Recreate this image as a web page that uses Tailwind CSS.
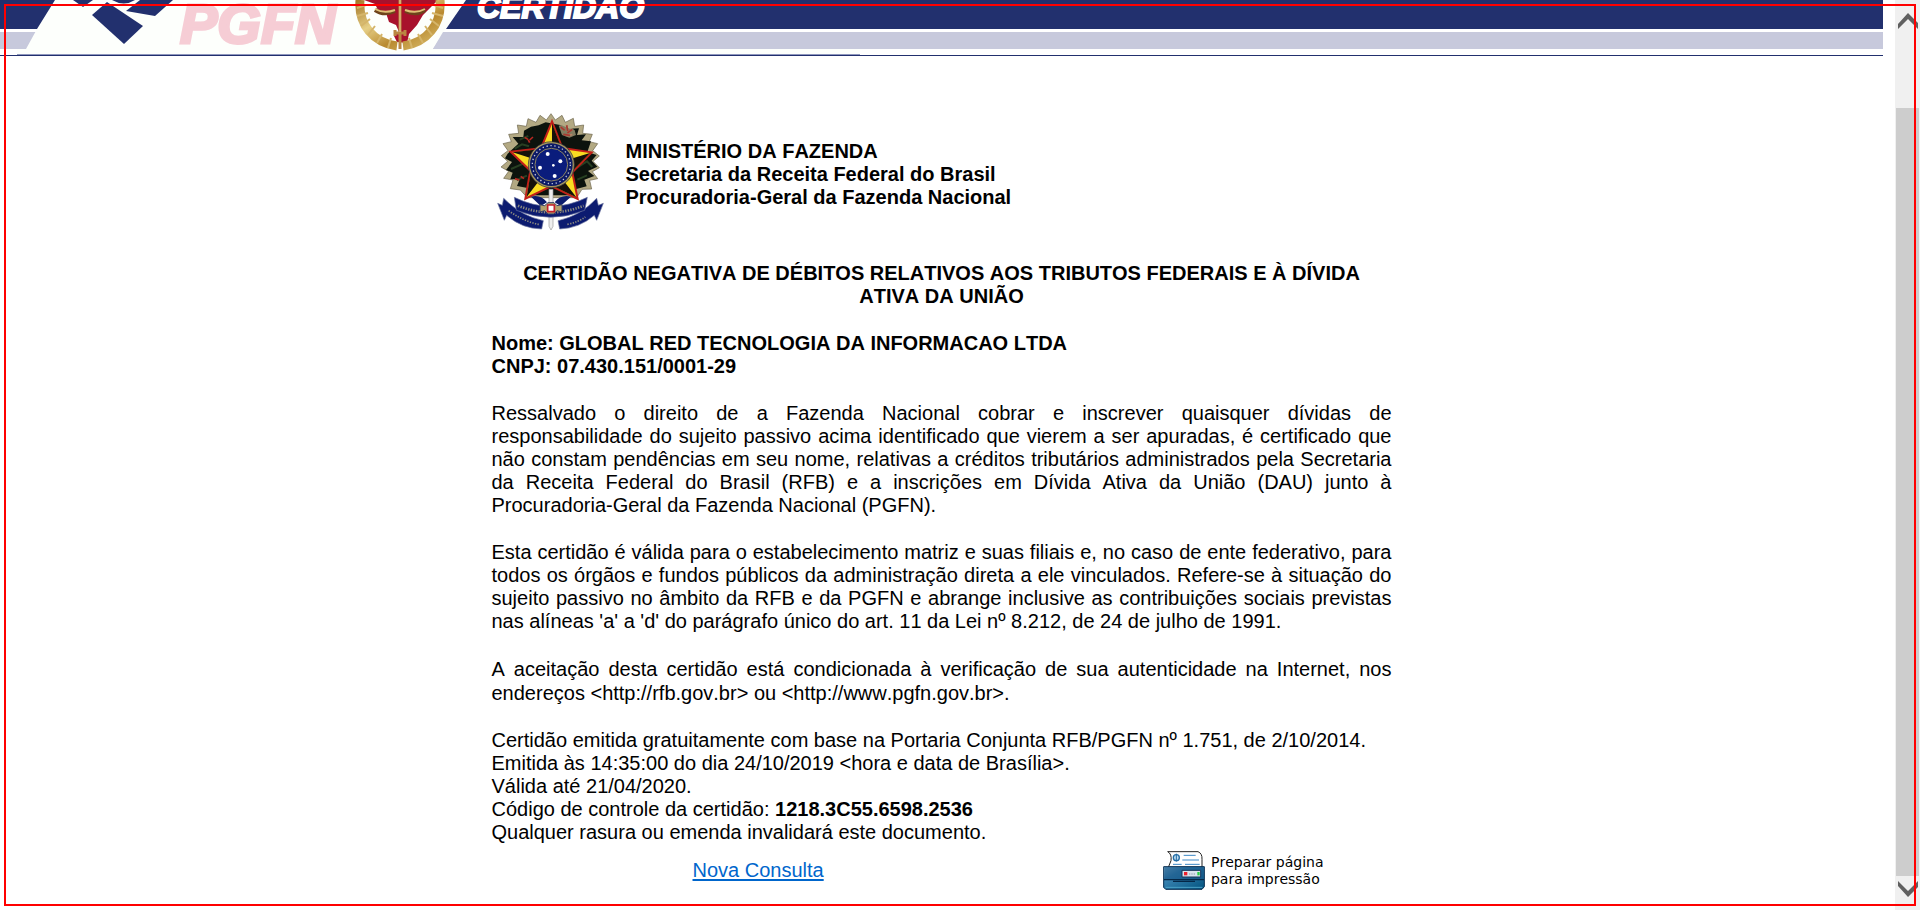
<!DOCTYPE html>
<html lang="pt-BR">
<head>
<meta charset="utf-8">
<title>Certidão Negativa de Débitos</title>
<script src="https://cdn.jsdelivr.net/npm/@tailwindcss/browser@4"></script>
</head>
<body class="relative flex h-screen overflow-hidden bg-white font-['Liberation_Sans',Arial,sans-serif] text-[20px] leading-[23px] text-black [font-kerning:none]">

<div class="mr-3 min-w-0 flex-1">
  <header class="relative overflow-hidden">
    <div class="h-[29px] bg-[#22306e]"></div>
    <div class="mt-[3px] h-[17px] bg-[#c7c9dc]"></div>
    <div class="mt-[6px] h-px bg-[#22306e]"></div>
    <svg class="absolute top-0 left-0" width="860" height="56" viewBox="0 0 860 56" role="img" aria-label="Receita Federal e PGFN, Certidão">
      <defs>
        <linearGradient id="gold" x1="0" x2="1" y1="0" y2="1"><stop offset="0" stop-color="#a77b2c"/><stop offset=".35" stop-color="#e6cf86"/><stop offset=".65" stop-color="#b98a30"/><stop offset="1" stop-color="#d9bd6c"/></linearGradient>
      </defs>
      <path d="M55 0H466L446 29 433 49H860V54H17V49H26L37 29Z" fill="#fdfffc"/>
      <path d="M443 32H860V49H433Z" fill="#c7c9dc"/>
      <path d="M446 29H860V32H443Z" fill="#fff"/>
      <path d="M17 54.500H860" stroke="#8f97bd"/>
      <g fill="#22306e">
        <path d="M107 2 143 26 124 44 92 15Z"/>
        <path d="M140 0H173L155 16 126 11Z"/>
        <path d="M73 0H93L83 7Z"/>
        <path d="M112 0H135Q124 7 112 0Z"/>
      </g>
      <text x="180" y="43" font-size="56" font-weight="700" font-style="italic" fill="#f6cdd5" stroke="#f6cdd5" stroke-width="3">PGFN</text>
      <path d="M364 0H438L432 6 423 15 417 25 409 34 407 43 397 42 394 36 399 32 396 25 389 22 386 13 378 10 375 4Z" fill="#a8112c"/>
      <path d="M360 0C358 25 374 43 397 46M440 0C442 25 426 43 403 46" fill="none" stroke="url(#gold)" stroke-width="9"/>
      <path d="M357 8 366 5M357 16 368 13M361 26 370 19M368 35 375 26M377 43 382 34M388 48 391 38M443 8 434 5M443 16 432 13M439 26 430 19M432 35 425 26M423 43 418 34M412 48 409 38" stroke="#d5b56a" stroke-width="2"/>
      <path d="M375 10Q384 16 395 11M405 11Q416 16 425 10" fill="none" stroke="#6e431b" stroke-width="4"/>
      <path d="M375 9Q384 14 395 10M405 10Q416 14 425 9" fill="none" stroke="#e1c077" stroke-width="2"/>
      <path d="M400 0V49M394 33H406M395 30V36M405 30V36" fill="none" stroke="#ba8641" stroke-width="3"/>
      <path d="M400 0V32" stroke="#efd09a"/>
      <text x="477" y="18" font-size="32" font-weight="700" font-style="italic" fill="#fff" stroke="#fff" stroke-width="2">CERTIDÃO</text>
    </svg>
  </header>

  <main class="mx-auto max-w-[900px] pt-[57px]">
    <div class="mb-[31px] flex items-center gap-[22px] pl-1">
      <svg class="shrink-0" width="108" height="118" viewBox="48 38 324 354" role="img" aria-label="Brasão da República">
        <path d="M213 40 226 59 246 45 256 66 280 54 284 78 311 74 308 99 337 102 328 124 353 130 338 151 358 167 339 183 358 202 337 214 353 235 329 240 335 266 306 267 290 292H142L121 269 91 265 99 239 71 234 86 213 63 200 83 183 64 166 84 151 69 130 94 124 86 102 116 99 112 74 139 78 144 55 168 66 180 45 199 59Z" fill="#b3a983" stroke="#6b644c" stroke-width="2"/>
        <path d="M197 66 176 75 153 79 132 91 130 110 98 110 115 130 83 160 75 174 96 185 78 209 98 217 91 237 119 237 111 257 143 263 155 285H276L289 266 320 258 313 238 343 227 324 212 352 199 335 181 350 164 322 155 333 123 305 120 318 102 291 104 297 84 269 85 245 75 228 72Z" fill="#0c130d"/>
        <path d="M104 145 126 132 147 138M93 206 130 190 145 203M286 205 321 183 337 200M292 238 321 225M110 239 141 226M119 118 145 107" fill="none" stroke="#273f22" stroke-width="6"/>
        <path d="M145 118 134 111M149 119 159 110M145 119 149 127M242 80 254 90M260 75 263 92M277 87 262 98M257 105 277 103M105 235 118 239M122 228 132 235" stroke="#b82822" stroke-width="5"/>
        <path d="M236 76 250 72 268 78 284 90 288 104 268 112 246 104Z" fill="#b3a983" opacity=".7"/>
        <path d="M242 80 254 90M260 75 263 92M277 87 262 98M250 102 270 105" stroke="#a53a30" stroke-width="5"/>
        <path d="M216 63 247 143 335 156 277 216 293 296 214 257 136 295 151 211 92 154 183 144Z" fill="#f8dc22" stroke="#c32019" stroke-width="6"/>
        <path d="M216 69V193L245 145ZM330 158 214 193 275 214ZM289 291 214 193V255ZM140 290 214 193 153 211ZM98 156 214 193 184 146Z" fill="#15110a"/>
        <circle cx="214" cy="193" r="69" fill="#a7985b" stroke="#242a42" stroke-width="2"/>
        <circle cx="214" cy="193" r="64" fill="#0c1a66"/>
        <circle cx="214" cy="193" r="57" fill="none" stroke="#c3c7dc" stroke-width="4" stroke-dasharray="4 8"/>
        <circle cx="214" cy="193" r="49" fill="#0a1c7c" stroke="#8c8462" stroke-width="3"/>
        <g fill="#fff"><circle cx="203" cy="161" r="6"/><circle cx="241" cy="183" r="6"/><circle cx="180" cy="202" r="6"/><circle cx="224" cy="227" r="6"/><circle cx="220" cy="195" r="4"/></g>
        <path d="M207 267H219V378L213 389 207 378Z" fill="#eee" stroke="#999" stroke-width="2"/>
        <path d="M153 289Q181 281 201 306L182 317ZM273 289Q243 281 224 306L242 317Z" fill="#0d1d6e"/>
        <path d="M53 309 67 315 71 294Q123 347 190 361L185 386Q125 385 80 345L73 360ZM370 309 355 315 350 294Q301 347 234 361L239 386Q298 384 343 345L350 360Z" fill="#0c1b70" stroke="#6c76a0" stroke-width="2"/>
        <path d="M103 291Q212 345 322 291L314 330Q212 372 109 330Z" fill="#0c1b70" stroke="#6c76a0" stroke-width="2"/>
        <path d="M114 316Q212 356 311 316" fill="none" stroke="#8d8c80" stroke-width="8" stroke-dasharray="4 4"/>
        <path d="M86 331Q129 363 180 373M262 372Q296 365 316 350" fill="none" stroke="#8d8c80" stroke-width="5" stroke-dasharray="4 4"/>
        <path d="M180 313 194 316 204 307H222L231 316 246 313V335L231 331 222 341H204L194 331 180 335Z" fill="#b5a36e" stroke="#354067" stroke-width="3"/>
        <path d="M203 314H223V334H203Z" fill="#fff" stroke="#c3202b" stroke-width="5"/>
      </svg>
      <p class="pt-[5px] font-bold">MINISTÉRIO DA FAZENDA<br>Secretaria da Receita Federal do Brasil<br>Procuradoria-Geral da Fazenda Nacional</p>
    </div>

    <h1 class="mb-6 px-6 text-center font-bold">CERTIDÃO NEGATIVA DE DÉBITOS RELATIVOS AOS TRIBUTOS FEDERAIS E À DÍVIDA ATIVA DA UNIÃO</h1>
    <p class="mb-6 font-bold">Nome: GLOBAL RED TECNOLOGIA DA INFORMACAO LTDA<br>CNPJ: 07.430.151/0001-29</p>
    <p class="mb-6 text-justify">Ressalvado o direito de a Fazenda Nacional cobrar e inscrever quaisquer dívidas de responsabilidade do sujeito passivo acima identificado que vierem a ser apuradas, é certificado que não constam pendências em seu nome, relativas a créditos tributários administrados pela Secretaria da Receita Federal do Brasil (RFB) e a inscrições em Dívida Ativa da União (DAU) junto à Procuradoria-Geral da Fazenda Nacional (PGFN).</p>
    <p class="mb-6 text-justify">Esta certidão é válida para o estabelecimento matriz e suas filiais e, no caso de ente federativo, para todos os órgãos e fundos públicos da administração direta a ele vinculados. Refere-se à situação do sujeito passivo no âmbito da RFB e da PGFN e abrange inclusive as contribuições sociais previstas nas alíneas 'a' a 'd' do parágrafo único do art. 11 da Lei nº 8.212, de 24 de julho de 1991.</p>
    <p class="mb-6 text-justify leading-[24px]">A aceitação desta certidão está condicionada à verificação de sua autenticidade na Internet, nos endereços &lt;http://rfb.gov.br&gt; ou &lt;http://www.pgfn.gov.br&gt;.</p>
    <p>Certidão emitida gratuitamente com base na Portaria Conjunta RFB/PGFN nº 1.751, de 2/10/2014.<br>Emitida às 14:35:00 do dia 24/10/2019 &lt;hora e data de Brasília&gt;.<br>Válida até 21/04/2020.<br>Código de controle da certidão: <b>1218.3C55.6598.2536</b><br>Qualquer rasura ou emenda invalidará este documento.</p>

    <div class="mt-[7px] flex items-center justify-between pr-[68px] pl-[201px]">
      <a href="#" class="text-[#0066cc] underline decoration-2 underline-offset-2">Nova Consulta</a>
      <button type="button" class="flex items-center gap-[6px] text-left font-['DejaVu_Sans',Verdana,sans-serif] text-[14px] leading-[17px]">
        <svg class="shrink-0" width="42" height="39" viewBox="0 0 126 117" aria-hidden="true">
          <defs><linearGradient id="body" x1="0" x2="1" y1="0" y2="1"><stop offset="0" stop-color="#9bc6df"/><stop offset=".3" stop-color="#3c85b3"/><stop offset="1" stop-color="#00527e"/></linearGradient></defs>
          <path d="M14 2H105Q118 7 117 25V49H16L24 29Q27 9 14 2Z" fill="#fff" stroke="#222" stroke-width="3"/>
          <circle cx="40" cy="20" r="9" fill="#bcdcf1" stroke="#236da5" stroke-width="4"/><path d="M40 8V32" stroke="#236da5" stroke-width="3"/>
          <path d="M62 13H98M58 27H108M30 40H56M66 40H110" stroke="#3c88c6" stroke-width="3"/>
          <path d="M2 47H124V107L117 115H8L2 109Z" fill="url(#body)" stroke="#062c50" stroke-width="3"/>
          <path d="M4 48H122V84H4Z" fill="#165585" opacity=".65"/>
          <path d="M3 86H123M30 91H96" stroke="#052746" stroke-width="4"/>
          <path d="M57 58H113V78H57Z" fill="#d9e2ed" stroke="#17365b" stroke-width="3"/>
          <path d="M63 63H73V73H63Z" fill="#ef1f2b"/><path d="M103 63H110V73H103Z" fill="#25ce45"/><path d="M78 69H98" stroke="#8997a6" stroke-width="3" stroke-dasharray="4 3"/>
          <path d="M8 109H118" stroke="#4ba2c6" stroke-width="3"/>
        </svg>
        <span>Preparar página<br>para impressão</span>
      </button>
    </div>
  </main>
</div>

<aside class="flex w-[25px] shrink-0 flex-col bg-[#f0f0f0]" aria-label="Barra de rolagem">
  <button type="button" class="flex h-[108px] items-start justify-center pt-[13px]" aria-label="Rolar para cima">
    <svg width="20" height="16" viewBox="0 0 20 16"><path d="M0 11 10 0 20 10V16L10 6 0 16Z" fill="#606060"/></svg>
  </button>
  <div class="mx-px flex-1 bg-[#cdcdcd]"></div>
  <button type="button" class="flex h-[34px] items-start justify-center pt-[5px]" aria-label="Rolar para baixo">
    <svg width="20" height="16" viewBox="0 0 20 16"><path d="M0 0 10 10 20 0V6L10 16 0 5Z" fill="#606060"/></svg>
  </button>
</aside>

<div class="pointer-events-none absolute inset-1 border-2 border-[#ff0000]"></div>
</body>
</html>
